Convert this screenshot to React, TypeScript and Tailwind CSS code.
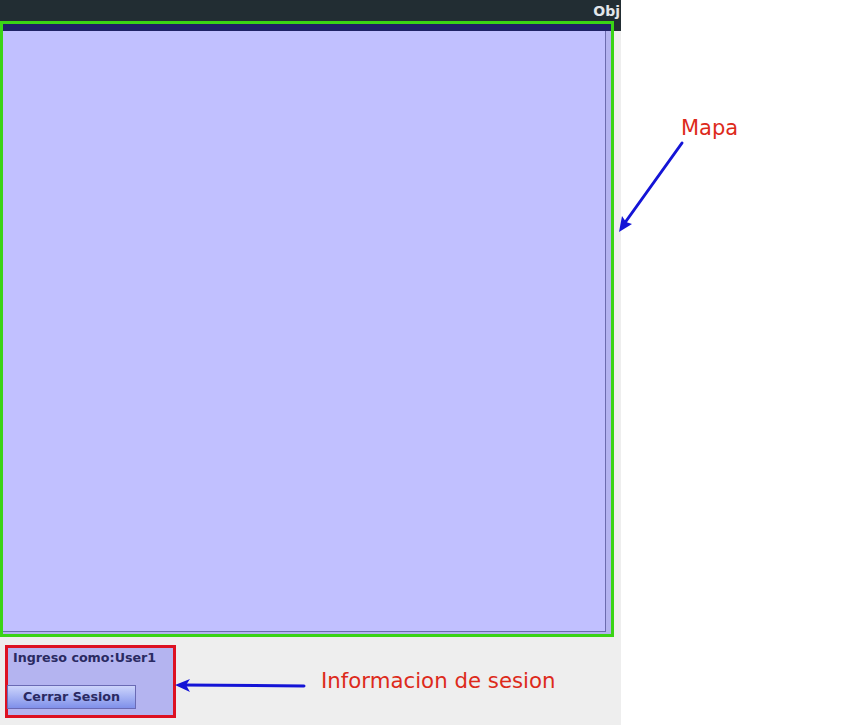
export default function App() {
  return (
    <div className="relative w-[860px] h-[725px] bg-white overflow-hidden font-['DejaVu_Sans',sans-serif]">
      <div className="flex h-full">
        {/* application window */}
        <div className="w-[621px] h-full bg-[#eeeeee] flex flex-col">
          <div className="h-[31px] shrink-0 bg-[#222d33] flex justify-end overflow-hidden">
            <span className="pt-[1px] pr-[1px] text-[14px] font-bold text-[#e2e6ea] leading-[20px] whitespace-nowrap">
              Obj
            </span>
          </div>

          {/* map panel */}
          <div className="relative shrink-0 -mt-[10px] w-[614px] h-[616px] border-[3px] border-[#3ad416] bg-[#b4b3f0] flex flex-col">
            <div className="h-[7px] shrink-0 bg-[#1f2266]" />
            <div className="h-[601px] shrink-0 w-[603px] bg-[#c1c0ff] border-r border-b border-[#6c6cae]" />
          </div>

          {/* session panel */}
          <div className="shrink-0 mt-[8px] ml-[5px] w-[171px] h-[73px] border-[3px] border-[#dd1122] bg-[#b4b4f0] flex flex-col">
            <span className="pl-[5px] pt-[3px] text-[12.7px] font-bold text-[#2a2a62] leading-[14px] whitespace-nowrap">
              Ingreso como:User1
            </span>
            <button className="mt-[20px] -ml-[1px] w-[129px] h-[24px] border border-[#6a6ab4] bg-gradient-to-b from-[#cdd4fb] to-[#8090ea] text-[12.7px] font-bold text-[#2a2a62] leading-[22px]">
              Cerrar Sesion
            </button>
          </div>
        </div>
        <div className="flex-1" />
      </div>

      {/* annotations */}
      <span className="absolute left-[681px] top-[114px] text-[21px] leading-[28px] text-[#dd2a1b]">
        Mapa
      </span>
      <span className="absolute left-[321px] top-[667px] text-[21.3px] leading-[28px] text-[#dd2a1b] whitespace-nowrap">
        Informacion de sesion
      </span>
      <svg className="absolute left-0 top-0" width="860" height="725" viewBox="0 0 860 725">
        <g stroke="#1414d6" strokeWidth="3" strokeLinecap="round" fill="none">
          <line x1="682" y1="143" x2="624" y2="224" />
          <line x1="304" y1="686" x2="184" y2="685" />
        </g>
        <polygon points="619,232 622,216 626,222 632,224" fill="#1414d6" />
        <polygon points="175,685 190,679 186,685 190,692" fill="#1414d6" />
      </svg>
    </div>
  );
}
